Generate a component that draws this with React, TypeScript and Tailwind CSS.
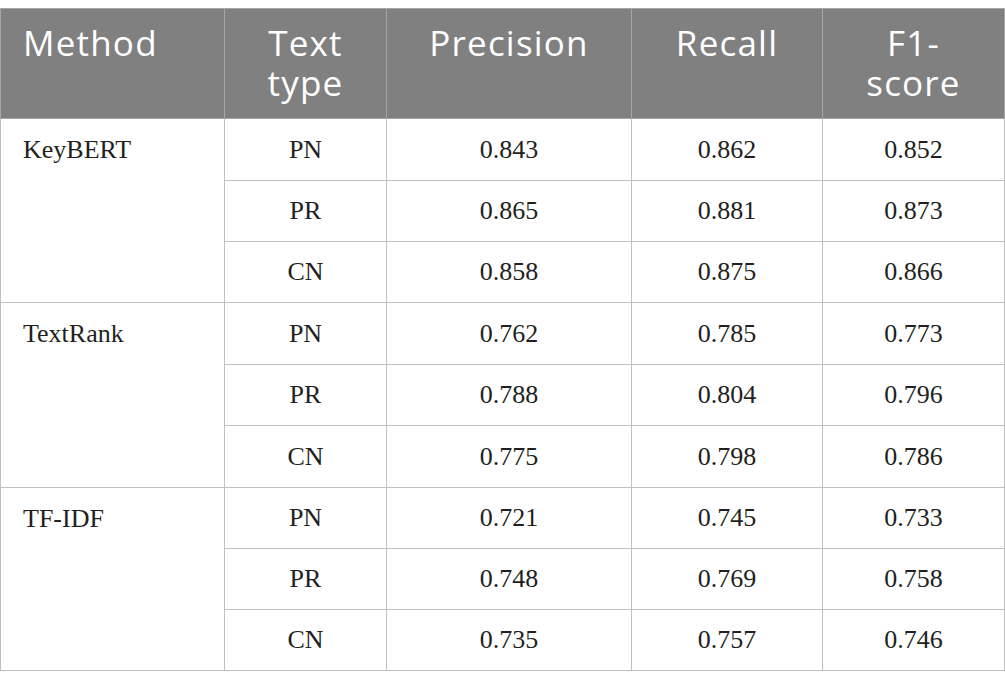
import React from "react";

const groups: { method: string; rows: [string, string, string, string][] }[] = [
  {
    method: "KeyBERT",
    rows: [
      ["PN", "0.843", "0.862", "0.852"],
      ["PR", "0.865", "0.881", "0.873"],
      ["CN", "0.858", "0.875", "0.866"],
    ],
  },
  {
    method: "TextRank",
    rows: [
      ["PN", "0.762", "0.785", "0.773"],
      ["PR", "0.788", "0.804", "0.796"],
      ["CN", "0.775", "0.798", "0.786"],
    ],
  },
  {
    method: "TF-IDF",
    rows: [
      ["PN", "0.721", "0.745", "0.733"],
      ["PR", "0.748", "0.769", "0.758"],
      ["CN", "0.735", "0.757", "0.746"],
    ],
  },
];

const heights = [
  "h-[62px]",
  "h-[61px]",
  "h-[61px]",
  "h-[62px]",
  "h-[61px]",
  "h-[62px]",
  "h-[61px]",
  "h-[61px]",
  "h-[61px]",
];

export default function App() {
  const serif = { fontFamily: '"Liberation Serif", "Times New Roman", serif' };
  const sans = { fontFamily: '"Open Sans", "Noto Sans", sans-serif' };
  let idx = 0;
  return (
    <div className="w-[1005px] h-[689px] bg-white pt-[8px]">
      <table className="w-[1005px] table-fixed border-collapse border border-[#c0c0c0]">
        <colgroup>
          <col className="w-[224px]" />
          <col className="w-[162px]" />
          <col className="w-[245px]" />
          <col className="w-[191px]" />
          <col className="w-[182px]" />
        </colgroup>
        <thead>
          <tr className="h-[110px] bg-[#808080] text-white text-[35px] leading-[40px] tracking-[1.2px]" style={sans}>
            <th className="border border-[#a6a6a6] px-[22px] align-top pt-[14px] text-left font-normal">Method</th>
            <th className="border border-[#a6a6a6] px-[20px] align-top pt-[14px] text-center font-normal">Text type</th>
            <th className="border border-[#a6a6a6] px-[10px] align-top pt-[14px] text-center font-normal">Precision</th>
            <th className="border border-[#a6a6a6] px-[10px] align-top pt-[14px] text-center font-normal">Recall</th>
            <th className="border border-[#a6a6a6] px-[40px] align-top pt-[14px] text-center font-normal">F1-score</th>
          </tr>
        </thead>
        <tbody className="text-[26px] leading-[30px] text-[#231f20]" style={serif}>
          {groups.map((g) =>
            g.rows.map((r, i) => {
              const h = heights[idx++];
              return (
                <tr key={g.method + i} className={h}>
                  {i === 0 && (
                    <td rowSpan={3} className="border border-[#c0c0c0] align-top px-[22px] pt-[16px]">
                      {g.method}
                    </td>
                  )}
                  <td className="border border-[#c0c0c0] text-center align-middle">{r[0]}</td>
                  <td className="border border-[#c0c0c0] text-center align-middle">{r[1]}</td>
                  <td className="border border-[#c0c0c0] text-center align-middle">{r[2]}</td>
                  <td className="border border-[#c0c0c0] text-center align-middle">{r[3]}</td>
                </tr>
              );
            })
          )}
        </tbody>
      </table>
    </div>
  );
}
